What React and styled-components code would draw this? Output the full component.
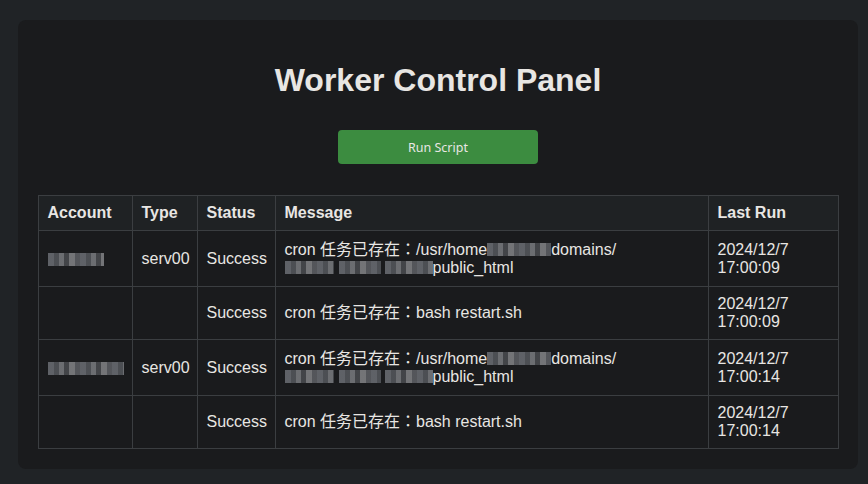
import React from 'react';
import styled, {createGlobalStyle} from 'styled-components';

const GlobalStyle = createGlobalStyle`
    html, body {
        margin: 0;
        padding: 0;
        background-color: #202326;
        color: #e8e6e3;
        font-family: "Liberation Sans", Arial, "Noto Sans CJK JP", sans-serif;
    }
`;

const Page = styled.div`
    padding: 20px 10px 15px 18px;
    height: 484px;
    box-sizing: border-box;
`;

const Panel = styled.div`
    background-color: #1a1b1d;
    border-radius: 8px;
    padding: 20px;
    height: 449px;
    box-sizing: border-box;
    display: flex;
    flex-direction: column;
    align-items: center;
`;

const Title = styled.h1`
    margin: 22px 0 0;
    font-size: 32px;
    line-height: 37px;
    font-weight: 700;
    color: #e8e6e3;
`;

const RunButton = styled.button`
    margin-top: 31px;
    width: 200px;
    height: 36px;
    border: none;
    border-radius: 4px;
    background-color: #3c8c40;
    color: #e8e6e3;
    font-family: "Noto Sans", sans-serif;
    font-size: 12.5px;
    cursor: pointer;

    &:hover {
        opacity: 0.9;
    }
`;

const Table = styled.table`
    margin-top: 31px;
    width: 800px;
    border-collapse: collapse;
    table-layout: fixed;
    font-size: 16px;
    line-height: 18px;
`;

const Th = styled.th`
    width: ${p => p.w}px;
    box-sizing: border-box;
    padding: 8px 8px 8px 9px;
    text-align: left;
    font-weight: 700;
    background-color: #1f2224;
    border: 1px solid #3b3e41;
`;

const Row = styled.tr`
    height: ${p => p.h}px;
`;

const Td = styled.td`
    padding: 8px 8px 8px 9px;
    vertical-align: middle;
    border: 1px solid #3b3e41;
`;

const Mosaic = styled.span`
    display: inline-block;
    width: ${p => p.w}px;
    height: 13px;
    margin-right: ${p => p.gap || 0}px;
    vertical-align: ${p => p.va || '-1px'};
    background:
        repeating-linear-gradient(90deg,
            #6b6e74 0 6px, #55585d 6px 11px, #7a7c80 11px 16px,
            #4a4c50 16px 21px, #838487 21px 27px, #5e6065 27px 32px);
    opacity: 0.85;
`;

const rows = [
    {h: 56, account: 56, type: 'serv00', status: 'Success', path: true, time: '17:00:09'},
    {h: 53, status: 'Success', path: false, time: '17:00:09'},
    {h: 56, account: 76, type: 'serv00', status: 'Success', path: true, time: '17:00:14'},
    {h: 53, status: 'Success', path: false, time: '17:00:14'},
];

const Message = ({path}) => path ? (
    <>
        cron 任务已存在：/usr/home<Mosaic w={64}/>domains/<br/>
        <Mosaic w={49} gap={5}/><Mosaic w={42} gap={4}/><Mosaic w={48}/>public_html
    </>
) : (
    <>cron 任务已存在：bash restart.sh</>
);

export default function App() {
    return (
        <Page>
            <GlobalStyle/>
            <Panel>
                <Title>Worker Control Panel</Title>
                <RunButton>Run Script</RunButton>
                <Table>
                    <thead>
                        <tr>
                            <Th w={94}>Account</Th>
                            <Th w={65}>Type</Th>
                            <Th w={78}>Status</Th>
                            <Th w={433}>Message</Th>
                            <Th w={130}>Last Run</Th>
                        </tr>
                    </thead>
                    <tbody>
                        {rows.map((r, i) => (
                            <Row key={i} h={r.h}>
                                <Td>{r.account ? <Mosaic w={r.account} va="middle"/> : null}</Td>
                                <Td>{r.type}</Td>
                                <Td>{r.status}</Td>
                                <Td><Message path={r.path}/></Td>
                                <Td>2024/12/7<br/>{r.time}</Td>
                            </Row>
                        ))}
                    </tbody>
                </Table>
            </Panel>
        </Page>
    );
}
